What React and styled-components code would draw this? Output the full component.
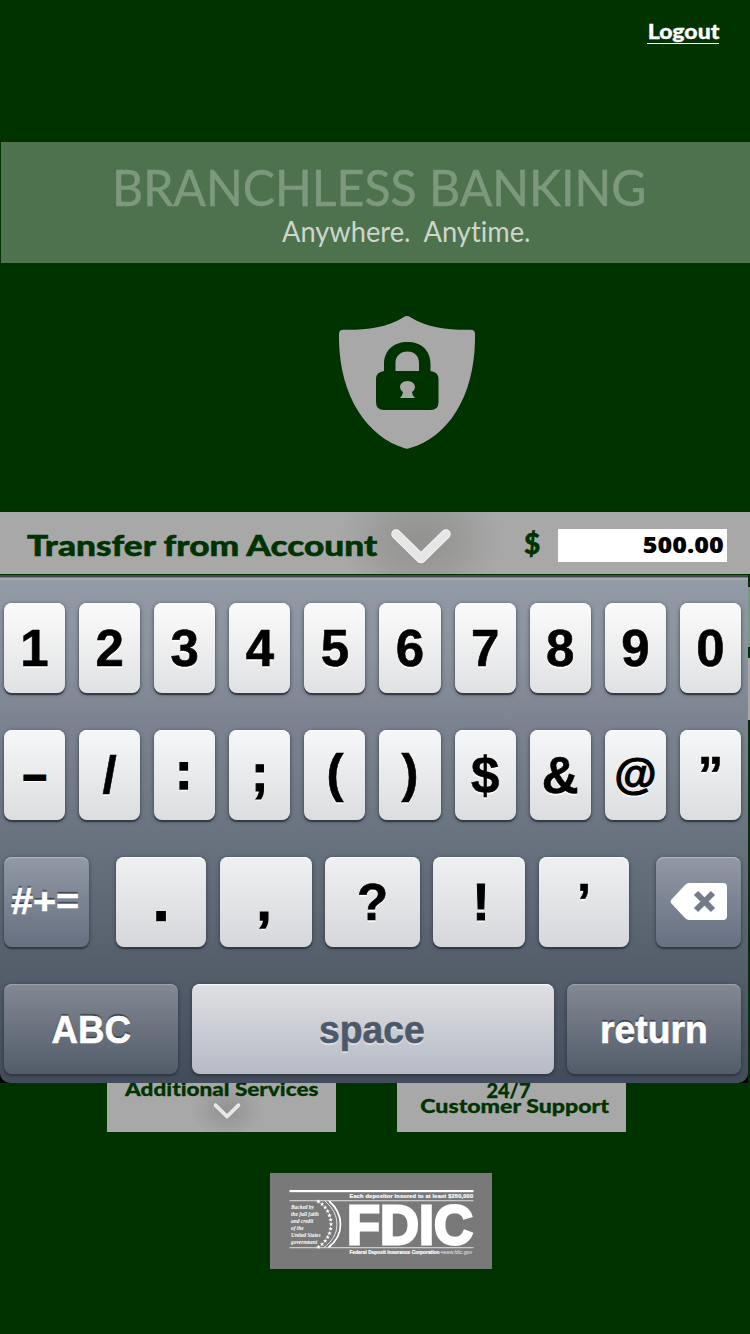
import React from "react";
import styled, { createGlobalStyle } from "styled-components";

const GlobalStyle = createGlobalStyle`
  body { margin: 0; background: #003300; }
  *, *::before, *::after { box-sizing: border-box; }
`;

const Screen = styled.main`
  display: flex;
  flex-direction: column;
  width: 750px;
  height: 1334px;
  overflow: hidden;
  background: #003300;
  font-family: Lato, sans-serif;
  font-variant-ligatures: none;
`;

const TextLine = styled.span`
  display: block;
  flex: none;
  white-space: pre;
  line-height: 1;
  font-size: ${(p) => p.$size}px;
  font-weight: ${(p) => p.$weight || 900};
  color: ${(p) => p.$color || "#003300"};
  -webkit-text-stroke: ${(p) => p.$stroke || 0}px currentColor;
  transform: scaleX(${(p) => p.$stretch || 1});
  transform-origin: ${(p) => p.$origin || "left"} center;
`;

const TopBar = styled.header`
  display: flex;
  justify-content: flex-end;
  height: 142px;
  padding: 21px 31px 0 0;
`;

const LogoutLink = styled.a`
  display: flex;
  justify-content: flex-end;
  width: 72px;
  height: 23px;
  border-bottom: 1px solid #fff;
`;

const Banner = styled.section`
  height: 121px;
  margin-left: 1px;
  padding: 20px 0 0 111px;
  background: #4d724d;
`;

const Tagline = styled.div`
  padding: 4px 0 0 170px;
`;

const ShieldArea = styled.section`
  display: flex;
  height: 249px;
  padding: 53px 0 0 339px;
`;

const TransferBar = styled.section`
  display: flex;
  align-items: center;
  height: 62px;
  padding: 0 23px 0 27px;
  background: radial-gradient(ellipse 80px 66px at 421px 28px, #929290, #9a9a99 45%, #a8a8a8) #a8a8a8;
  flex: none;
`;

const TransferLabel = styled.div`
  width: 364px;
  padding-top: 4px;
`;

const ChevronSlot = styled.div`
  width: 133px;
  height: 62px;
  padding-top: 17px;
`;

const AmountInput = styled.div`
  display: flex;
  justify-content: flex-end;
  width: 169px;
  height: 33px;
  margin-top: 4px;
  margin-left: auto;
  padding: 4px 3px 0 0;
  background: #fff;
  font-family: "Open Sans", sans-serif;
`;

const KeyboardRow = styled.section`
  display: flex;
  height: 509px;
  padding-top: 1px;
  flex: none;
`;

const Keyboard = styled.div`
  width: 748px;
  height: 508px;
  padding: 28px 7px 0 4px;
  display: flex;
  flex-direction: column;
  gap: 37px;
  border-radius: 0 0 10px 10px;
  background: linear-gradient(#45484d 0, #45484d 2px, #a9b0ba 3px, #a3abb5 4px, #929aa6 6px, #8a929e 80px, #7b8390 150px, #68727e 270px, #56606d 385px, #434c5c 508px);
  font-family: "Liberation Sans", Arial, sans-serif;
`;

const KeyboardBack = styled.div`
  background: #000;
`;

const PageEdge = styled.div`
  flex: 1;
  background: linear-gradient(#003300 12px, #779a77 12px, #779a77 72px, #003300 72px, #003300 83px, #a8a8a8 83px, #a8a8a8 145px, #003300 145px);
`;

const KeyRow = styled.div`
  display: grid;
  grid-template-columns: ${(p) => p.$cols};
  column-gap: ${(p) => p.$gap || 0}px;
  height: 90px;
`;

const keySkins = {
  light1: ["#fbfbfb", "#e0e1e3", "#fff"],
  light2: ["#f6f7f8", "#dcdddf", "#fff"],
  light3: ["#eff0f1", "#d6d7db", "#fff"],
  space: ["#dfe0e3", "#b6bac4", "#fafafa"],
  dark3: ["#9298a5", "#667080", "#b4b9c2"],
  dark4: ["#838894", "#525c69", "#a0a5af"],
};

const Key = styled.button`
  display: flex;
  align-items: center;
  justify-content: center;
  grid-column: ${(p) => p.$col || "auto"};
  min-width: 0;
  height: 90px;
  padding: 0;
  border: 0;
  border-radius: 8px;
  font: inherit;
  background: linear-gradient(${(p) => keySkins[p.$skin][0]}, ${(p) => keySkins[p.$skin][1]});
  box-shadow: inset 0 2px 1px -1px ${(p) => keySkins[p.$skin][2]}, 0 2px 1px #343a44, 0 1px 4px rgba(30, 38, 50, 0.6);
`;

const KeyLabel = styled.span`
  display: block;
  font-weight: 700;
  line-height: 1;
  white-space: pre;
  font-size: ${(p) => p.$size || 51}px;
  color: ${(p) => p.$color || "#000"};
  text-shadow: ${(p) => p.$shadow || "0 2px 1px #fff"};
  -webkit-text-stroke: ${(p) => p.$stroke ?? 0.6}px currentColor;
  transform: translate(${(p) => p.$x || 0}px, ${(p) => p.$y || 0}px) scaleX(${(p) => p.$stretch || 1});
`;

const Services = styled.section`
  display: flex;
  gap: 61px;
  height: 90px;
  padding-left: 107px;
  flex: none;
`;

const ServiceTile = styled.div`
  display: flex;
  flex-direction: column;
  align-items: center;
  width: 229px;
  height: 49px;
  overflow: hidden;
  background: ${(p) => (p.$glow ? "radial-gradient(ellipse 36px 28px at 120px 27px, #929292, #a8a8a8) " : "")}#a8a8a8;
`;

const TileLine = styled.div`
  margin-top: ${(p) => p.$top}px;
  margin-left: ${(p) => p.$left || 0}px;
  height: ${(p) => p.$height}px;
  flex: none;
`;

const Footer = styled.footer`
  padding-left: 270px;
`;

function Shield() {
  return (
    <svg width="136" height="133" viewBox="0 0 136 133">
      <path d="M64.5 1.2 Q68 -1 71.500 1.200 C89 12 109 14 131.500 13.700 Q136 13.700 136 18 C137 78 110 121 71 132 Q68 133.500 65 132 C27 120 -1 78 0 18 Q0 13.700 4.500 13.700 C27 14 47 12 64.500 1.200Z" fill="#a8a8a8" />
      <path fillRule="evenodd" d="M45 55 V48 C45 34 55 26 68.500 26 S91.500 34 91.500 48 V55 Q99.500 56 99.500 63 V86 Q99.500 94 91.500 94 H45 Q37 94 37 86 V63 Q37 56 45 55Z M56.500 55 H80 V47 C80 40 75.500 35.500 68.500 35.500 S56.500 40 56.500 47Z" fill="#003300" />
      <path d="M68.500 65 C73 65 76 68 76 71 Q76 74 73 76 Q73 79 76 82 H61 Q64 79 64 76 Q61 74 61 71 C61 68 64 65 68.500 65Z" fill="#a8a8a8" />
    </svg>
  );
}

const ChevronSvg = styled.svg`
  display: block;
  overflow: visible;
`;

function Chevron({ width, height, stroke }) {
  return (
    <ChevronSvg width={width} height={height} viewBox="0 0 60 35">
      <path d="M5 5 L30 29.500 L55 5" fill="none" stroke="#f7f7f7" strokeWidth={stroke + 1} strokeLinecap="round" strokeLinejoin="round" />
      <path d="M5 5 L30 29.500 L55 5" fill="none" stroke="#e6e6e6" strokeWidth={stroke - 1} strokeLinecap="round" strokeLinejoin="round" />
    </ChevronSvg>
  );
}

function Backspace() {
  return (
    <svg width="58" height="40" viewBox="0 0 58 40">
      <path d="M19 1 H53 Q57 1 57 5 V34 Q57 38 53 38 H19 Q17 38 15 36 L1 21 Q0 19.500 1 18 L15 3 Q17 1 19 1Z" fill="#fff" />
      <path d="M26 11 L43 28 M43 11 L26 28" stroke="#737b8a" strokeWidth="6" strokeLinecap="butt" />
    </svg>
  );
}

const stars = Array.from({ length: 13 }, (_, i) => {
  const a = ((i - 6) * 9.8 * Math.PI) / 180;
  return [35 + 26 * Math.cos(a), 51.2 + 26.5 * Math.sin(a)];
});

const motto = ["Backed by", "the full faith", "and credit", "of the", "United States", "government"];

function FdicLogo() {
  return (
    <svg width="222" height="96" viewBox="0 0 222 96" fill="#fff">
      <rect width="222" height="96" fill="#797979" />
      <rect x="19.500" y="17" width="184" height="2.200" />
      <rect x="19.500" y="27.300" width="184" height="0.900" opacity="0.850" />
      <rect x="19.500" y="74.300" width="184" height="0.900" opacity="0.850" />
      <g fontFamily="Liberation Sans, Arial, sans-serif">
        <text x="79.500" y="25" fontSize="5.600" fontWeight="700" stroke="#fff" strokeWidth="0.200" textLength="123.500" lengthAdjust="spacing">Each depositor insured to at least $250,000</text>
        <text x="77" y="71" fontSize="55" fontWeight="700" stroke="#fff" strokeWidth="2.800" textLength="126" lengthAdjust="spacingAndGlyphs">FDIC</text>
        <text x="79.500" y="81.400" fontSize="5.400" fontWeight="700" stroke="#fff" strokeWidth="0.200" textLength="90" lengthAdjust="spacingAndGlyphs">Federal Deposit Insurance Corporation</text>
        <text x="170.500" y="81.400" fontSize="5.400" opacity="0.850" textLength="31.500" lengthAdjust="spacingAndGlyphs">•www.fdic.gov</text>
      </g>
      <g fontFamily="Liberation Serif, serif" fontStyle="italic" fontWeight="700" fontSize="5.400">
        {motto.map((line, i) => (
          <text key={line} x="21" y={35.7 + i * 7.1}>{line}</text>
        ))}
      </g>
      <g fill="none" stroke="#fff">
        <path d="M59 28 Q70.500 38 70.500 51.500 T58.500 74.500" strokeWidth="1.700" />
        <path d="M55 28 Q67 38 67 51.500 T54 74.500" strokeWidth="0.800" />
      </g>
      {stars.map(([x, y]) => (
        <path key={y} transform={`translate(${x} ${y})`} d="M0 -2.200 L.7 -.7 L2.200 -.6 L1 .4 L1.300 1.900 L0 1.100 L-1.300 1.900 L-1 .4 L-2.200 -.6 L-.7 -.7Z" />
      ))}
    </svg>
  );
}

const darkShadow = "0 -2px 1px rgba(50, 57, 68, 0.85)";

const row2 = [
  ["–", { $size: 46, $stroke: 2, $y: -1, $stretch: 0.92 }], ["/", {}], [":", { $y: -4, $x: -1, $stroke: 1.5 }], [";", { $y: -2, $stroke: 1.2 }], ["(", { $y: -2 }],
  [")", { $y: -2 }], ["$", {}], ["&", {}], ["@", { $size: 43, $y: -1, $stroke: 1.2 }], ["”", {}],
];

export default function App() {
  return (
    <Screen>
      <GlobalStyle />
      <TopBar>
        <LogoutLink>
          <TextLine $size={20} $color="#fff" $stretch={1.15} $stroke={0.3} $origin="right">Logout</TextLine>
        </LogoutLink>
      </TopBar>
      <Banner>
        <TextLine $size={50} $weight={400} $color="#7d997d" $stretch={0.964} $stroke={0.5}>BRANCHLESS BANKING</TextLine>
        <Tagline>
          <TextLine $size={29} $weight={400} $color="#ccd6cc" $stretch={0.94}>Anywhere.  Anytime.</TextLine>
        </Tagline>
      </Banner>
      <ShieldArea><Shield /></ShieldArea>
      <TransferBar>
        <TransferLabel>
          <TextLine $size={28.5} $stretch={1.235} $stroke={0.5}>Transfer from Account</TextLine>
        </TransferLabel>
        <ChevronSlot><Chevron width={60} height={35} stroke={8.5} /></ChevronSlot>
        <TextLine $size={28} $stroke={0.5}>$</TextLine>
        <AmountInput>
          <TextLine $size={23.5} $weight={800} $color="#000" $origin="right" $stretch={1.07}>500.00</TextLine>
        </AmountInput>
      </TransferBar>
      <KeyboardRow>
        <KeyboardBack>
          <Keyboard>
            <KeyRow $cols="repeat(10, 1fr)" $gap={14}>
              {[..."1234567890"].map((d) => (
                <Key key={d} $skin="light1"><KeyLabel>{d}</KeyLabel></Key>
              ))}
            </KeyRow>
            <KeyRow $cols="repeat(10, 1fr)" $gap={14}>
              {row2.map(([c, props]) => (
                <Key key={c} $skin="light2"><KeyLabel $y={0} {...props}>{c}</KeyLabel></Key>
              ))}
            </KeyRow>
            <KeyRow $cols="85px 27px 90px 14px 92px 13px 95px 13px 92px 14px 90px 27px 85px">
              <Key $skin="dark3"><KeyLabel $size={36} $color="#fff" $shadow={darkShadow} $stretch={1.1} $x={-1}>#+=</KeyLabel></Key>
              <Key $skin="light3" $col={3}><KeyLabel $stroke={2.5}>.</KeyLabel></Key>
              <Key $skin="light3" $col={5}><KeyLabel $stroke={1.5} $x={-2}>,</KeyLabel></Key>
              <Key $skin="light3" $col={7}><KeyLabel>?</KeyLabel></Key>
              <Key $skin="light3" $col={9}><KeyLabel $x={2} $stroke={1}>!</KeyLabel></Key>
              <Key $skin="light3" $col={11}><KeyLabel>’</KeyLabel></Key>
              <Key $skin="dark3" $col={13}><Backspace /></Key>
            </KeyRow>
            <KeyRow $cols="174px 362px 174px" $gap={13.5}>
              <Key $skin="dark4"><KeyLabel $size={39} $color="#fff" $shadow={darkShadow} $stretch={0.94}>ABC</KeyLabel></Key>
              <Key $skin="space"><KeyLabel $size={38} $color="#4d586a" $shadow="0 2px 1px #e2e4e8" $stretch={0.98} $x={-1} $y={1}>space</KeyLabel></Key>
              <Key $skin="dark4"><KeyLabel $size={38} $color="#fff" $shadow={darkShadow} $stretch={0.98} $y={1}>return</KeyLabel></Key>
            </KeyRow>
          </Keyboard>
        </KeyboardBack>
        <PageEdge />
      </KeyboardRow>
      <Services>
        <ServiceTile $glow>
          <TileLine $top={-4} $height={24}>
            <TextLine $size={19.5} $origin="center" $stretch={1.155} $stroke={0.3}>Additional Services</TextLine>
          </TileLine>
          <TileLine $top={0} $left={11} $height={16}>
            <Chevron width={28} height={16} stroke={7} />
          </TileLine>
        </ServiceTile>
        <ServiceTile>
          <TileLine $top={-3} $left={-6} $height={16}>
            <TextLine $size={20} $origin="center" $stroke={0.3}>24/7</TextLine>
          </TileLine>
          <TileLine $top={0} $left={6} $height={20}>
            <TextLine $size={19.5} $origin="center" $stretch={1.185} $stroke={0.3}>Customer Support</TextLine>
          </TileLine>
        </ServiceTile>
      </Services>
      <Footer><FdicLogo /></Footer>
    </Screen>
  );
}
